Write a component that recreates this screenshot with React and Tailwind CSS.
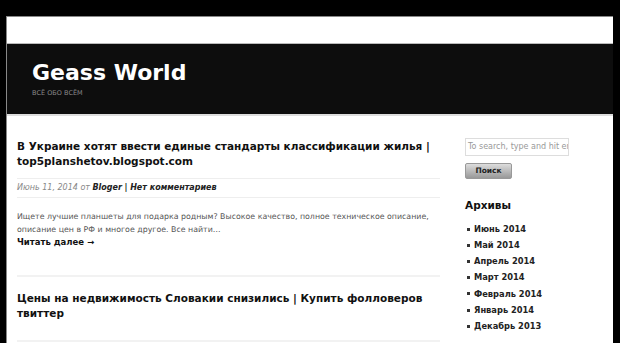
import React from "react";

const archives = [
  "Июнь 2014",
  "Май 2014",
  "Апрель 2014",
  "Март 2014",
  "Февраль 2014",
  "Январь 2014",
  "Декабрь 2013",
];

export default function App() {
  return (
    <div className="min-h-screen h-[343px] w-full bg-black overflow-hidden pt-[16px] pl-[6px] pr-[7px] font-['DejaVu_Sans',sans-serif]">
      <div className="bg-white h-full border-l border-t border-[#888]">
        {/* top strip */}
        <div className="h-[27px] bg-white border-b border-[#bbb]"></div>

        {/* header */}
        <div className="h-[72px] bg-[#0d0d0d] pl-[25px] pt-[15px] border-b-2 border-[#ddd]">
          <h1 className="text-white text-[22px] font-bold leading-[28px] tracking-[0px]">Geass World</h1>
          <p className="text-[#888] text-[6.5px] leading-[10px] mt-[1px]">ВСЁ ОБО ВСЁМ</p>
        </div>

        <div className="flex">
          {/* main column */}
          <div className="w-[423px] ml-[10px] pt-[23px]">
            <article>
              <h2 className="text-[#111] text-[10.5px] font-bold leading-[15px]">
                В Украине хотят ввести единые стандарты классификации жилья | top5planshetov.blogspot.com
              </h2>
              <div className="mt-[9px] border-t border-b border-[#eee] py-[4px] text-[8px] italic leading-[10px] text-[#888]">
                Июнь 11, 2014 от <span className="font-bold text-[#222]">Bloger</span>{" "}
                <span className="font-bold text-[#222]">| Нет комментариев</span>
              </div>
              <p className="mt-[12px] text-[7.85px] leading-[13px] text-[#555]">
                Ищете лучшие планшеты для подарка родным? Высокое качество, полное техническое описание, описание цен в РФ и многое другое. Все найти…
              </p>
              <a className="block text-[8.5px] font-bold leading-[12px] text-[#111]">Читать далее →</a>
            </article>

            <div className="mt-[27px] border-t-2 border-[#f2f2f2]"></div>

            <article className="pt-[14px]">
              <h2 className="text-[#111] text-[10.5px] font-bold leading-[15px]">
                Цены на недвижимость Словакии снизились | Купить фолловеров твиттер
              </h2>
              <div className="mt-[19px] border-t-2 border-[#f2f2f2]"></div>
            </article>
          </div>

          {/* sidebar */}
          <aside className="ml-[25px] pt-[22px] w-[110px]">
            <div className="w-[104px] h-[18px] border border-[#ddd] bg-white overflow-hidden whitespace-nowrap px-[2px] text-[8px] leading-[16px] text-[#999]">
              To search, type and hit enter
            </div>
            <button className="mt-[1px] w-[47px] h-[16px] rounded-[2px] border border-[#999] bg-gradient-to-b from-[#ddd] to-[#999] text-[7.5px] font-bold leading-[14px] text-[#222]">
              Поиск
            </button>

            <h3 className="mt-[18px] text-[10.5px] font-bold leading-[14px] text-[#111]">Архивы</h3>
            <ul className="mt-[9px]">
              {archives.map((a) => (
                <li key={a} className="flex items-center h-[16.2px] text-[8.3px] font-bold text-[#222]">
                  <span className="w-[3px] h-[3px] bg-[#333] ml-[2px] mr-[4px]"></span>
                  {a}
                </li>
              ))}
            </ul>
          </aside>
        </div>
      </div>
    </div>
  );
}
